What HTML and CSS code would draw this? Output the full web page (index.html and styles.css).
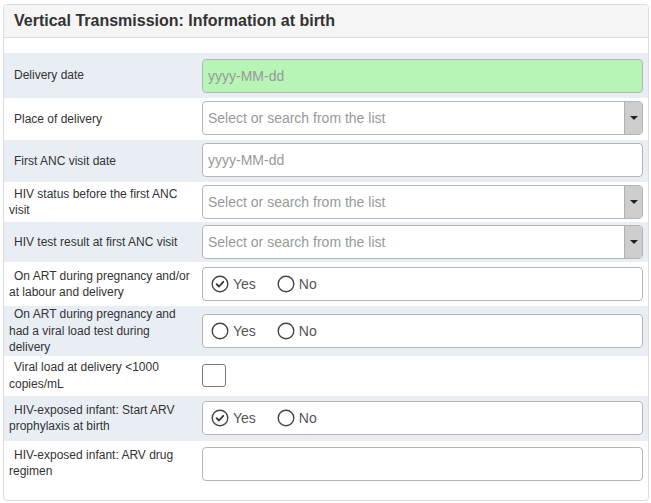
FILE: index.html
```html
<!DOCTYPE html>
<html>
<head>
<meta charset="utf-8">
<link rel="stylesheet" href="styles.css">
</head>
<body>
<div class="panel">
  <div class="panel-heading">Vertical Transmission: Information at birth</div>
  <div class="panel-body">
    <div class="row shade">
      <div class="label"><span class="ind"></span>Delivery date</div>
      <div class="field f-date1"><div class="input green"><span class="ph">yyyy-MM-dd</span></div></div>
    </div>
    <div class="row">
      <div class="label"><span class="ind"></span>Place of delivery</div>
      <div class="field f-3-5"><div class="select"><span class="ph">Select or search from the list</span><span class="caret-box"><span class="caret"></span></span></div></div>
    </div>
    <div class="row shade">
      <div class="label"><span class="ind"></span>First ANC visit date</div>
      <div class="field f-3-5"><div class="input"><span class="ph">yyyy-MM-dd</span></div></div>
    </div>
    <div class="row">
      <div class="label"><span class="ind"></span>HIV status before the first ANC visit</div>
      <div class="field f-3-3"><div class="select"><span class="ph">Select or search from the list</span><span class="caret-box"><span class="caret"></span></span></div></div>
    </div>
    <div class="row shade">
      <div class="label"><span class="ind"></span>HIV test result at first ANC visit</div>
      <div class="field f-3-3"><div class="select"><span class="ph">Select or search from the list</span><span class="caret-box"><span class="caret"></span></span></div></div>
    </div>
    <div class="row">
      <div class="label"><span class="ind"></span>On ART during pregnancy and/or at labour and delivery</div>
      <div class="field f-5-5">
        <div class="radios">
          <span class="opt"><svg class="rad" viewBox="0 0 18 18"><circle cx="9" cy="9" r="7.8"/><path class="chk" d="M5.6 9.2 L8 11.5 L12.3 6.8"/></svg>Yes</span>
          <span class="opt"><svg class="rad" viewBox="0 0 18 18"><circle cx="9" cy="9" r="7.8"/></svg>No</span>
        </div>
      </div>
    </div>
    <div class="row shade">
      <div class="label"><span class="ind"></span>On ART during pregnancy and had a viral load test during delivery</div>
      <div class="field f-5-5">
        <div class="radios">
          <span class="opt"><svg class="rad" viewBox="0 0 18 18"><circle cx="9" cy="9" r="7.8"/></svg>Yes</span>
          <span class="opt"><svg class="rad" viewBox="0 0 18 18"><circle cx="9" cy="9" r="7.8"/></svg>No</span>
        </div>
      </div>
    </div>
    <div class="row">
      <div class="label"><span class="ind"></span>Viral load at delivery &lt;1000 copies/mL</div>
      <div class="field f-chk"><div class="checkbox"></div></div>
    </div>
    <div class="row shade">
      <div class="label"><span class="ind"></span>HIV-exposed infant: Start ARV prophylaxis at birth</div>
      <div class="field f-5-6">
        <div class="radios">
          <span class="opt"><svg class="rad" viewBox="0 0 18 18"><circle cx="9" cy="9" r="7.8"/><path class="chk" d="M5.6 9.2 L8 11.5 L12.3 6.8"/></svg>Yes</span>
          <span class="opt"><svg class="rad" viewBox="0 0 18 18"><circle cx="9" cy="9" r="7.8"/></svg>No</span>
        </div>
      </div>
    </div>
    <div class="row">
      <div class="label"><span class="ind"></span>HIV-exposed infant: ARV drug regimen</div>
      <div class="field f-6-5"><div class="input"></div></div>
    </div>
  </div>
</div>
</body>
</html>
```
FILE: styles.css
```css
html, body {
  margin: 0;
  padding: 0;
  background: #fff;
}
body {
  padding: 4px 2px 0 3px;
  font-family: "Liberation Sans", Arial, sans-serif;
  color: #333;
}
.panel {
  border: 1px solid #dcdcdc;
  border-radius: 4px;
  overflow: hidden;
}
.panel-heading {
  background: #f5f5f5;
  border-bottom: 1px solid #dcdcdc;
  padding: 7px 10px 7px;
  font-size: 16px;
  line-height: 18px;
  font-weight: bold;
  color: #333;
}
.panel-body {
  padding: 15px 0 14px 0;
}
.row {
  display: grid;
  grid-template-columns: 198px 1fr;
  align-items: center;
}
.row.shade {
  background: #e9eef5;
}
.label {
  padding: 0 8px 0 5px;
  font-size: 12px;
  line-height: 16.5px;
  color: #333;
}
.ind {
  display: inline-block;
  width: 5px;
}
.field {
  padding-right: 5px;
}
.f-date1 { padding-top: 6px; padding-bottom: 5px; }
.f-3-5 { padding-top: 3px; padding-bottom: 5px; }
.f-3-3 { padding-top: 3px; padding-bottom: 3px; }
.f-5-5 { padding-top: 5px; padding-bottom: 5px; }
.f-5-6 { padding-top: 5px; padding-bottom: 6px; }
.f-6-5 { padding-top: 6px; padding-bottom: 5px; }
.f-chk { padding-top: 8px; padding-bottom: 9px; }

.input, .select, .radios {
  box-sizing: border-box;
  height: 34px;
  border: 1px solid #b5b5b5;
  border-radius: 4px;
  background: #fff;
  display: flex;
  align-items: center;
  font-size: 14px;
}
.input.green {
  background: #b6f5b6;
}
.input, .select {
  padding-left: 5px;
}
.ph {
  color: #999;
  flex: 1;
}
.select {
  padding-right: 0;
  overflow: hidden;
}
.caret-box {
  align-self: stretch;
  width: 17px;
  background: #cdcdcd;
  border-left: 1px solid #b0b0b0;
  display: flex;
  align-items: center;
  justify-content: center;
}
.caret {
  width: 0;
  height: 0;
  border-left: 4px solid transparent;
  border-right: 4px solid transparent;
  border-top: 4px solid #222;
}
.radios {
  padding-left: 8px;
  color: #555;
  gap: 21px;
}
.opt {
  display: flex;
  align-items: center;
  gap: 4px;
}
.rad {
  width: 18px;
  height: 18px;
}
.rad circle {
  fill: none;
  stroke: #444;
  stroke-width: 1.4;
}
.rad .chk {
  fill: none;
  stroke: #333;
  stroke-width: 1.8;
  stroke-linecap: round;
  stroke-linejoin: round;
}
.checkbox {
  box-sizing: border-box;
  width: 24px;
  height: 23px;
  border: 1px solid #777;
  border-radius: 3px;
  background: #fff;
}
```
